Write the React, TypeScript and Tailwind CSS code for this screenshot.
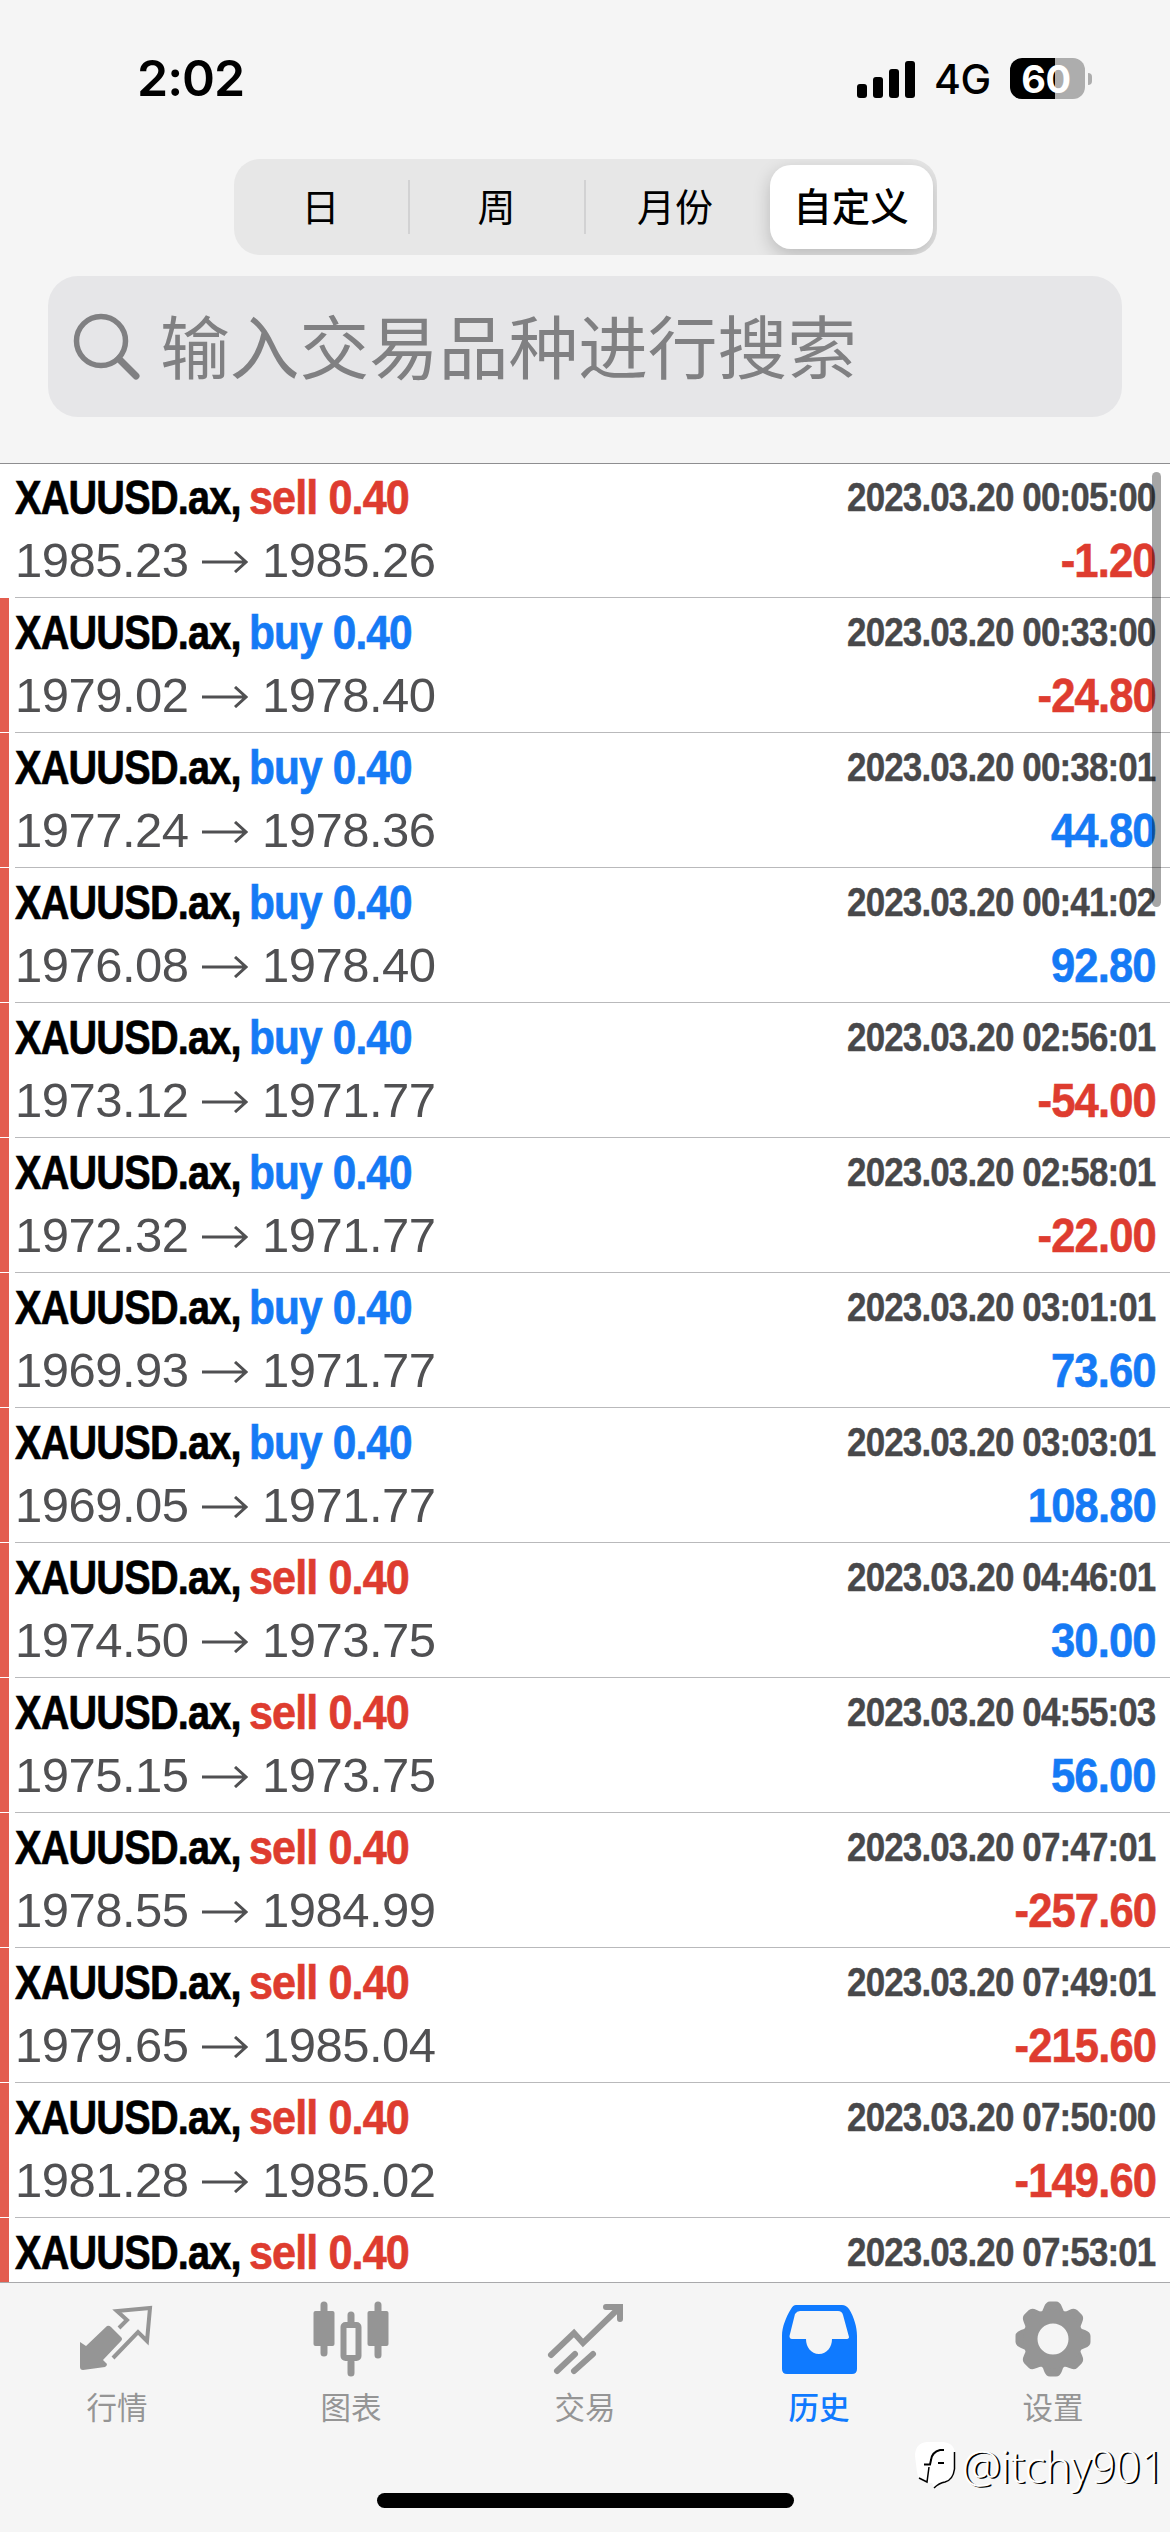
import type { ReactNode } from 'react'

interface Deal {
  side: 'buy' | 'sell'
  time: string
  open?: string
  close?: string
  profit?: string
}

const deals: Deal[] = [
  { side: 'sell', open: '1985.23', close: '1985.26', time: '2023.03.20 00:05:00', profit: '-1.20' },
  { side: 'buy', open: '1979.02', close: '1978.40', time: '2023.03.20 00:33:00', profit: '-24.80' },
  { side: 'buy', open: '1977.24', close: '1978.36', time: '2023.03.20 00:38:01', profit: '44.80' },
  { side: 'buy', open: '1976.08', close: '1978.40', time: '2023.03.20 00:41:02', profit: '92.80' },
  { side: 'buy', open: '1973.12', close: '1971.77', time: '2023.03.20 02:56:01', profit: '-54.00' },
  { side: 'buy', open: '1972.32', close: '1971.77', time: '2023.03.20 02:58:01', profit: '-22.00' },
  { side: 'buy', open: '1969.93', close: '1971.77', time: '2023.03.20 03:01:01', profit: '73.60' },
  { side: 'buy', open: '1969.05', close: '1971.77', time: '2023.03.20 03:03:01', profit: '108.80' },
  { side: 'sell', open: '1974.50', close: '1973.75', time: '2023.03.20 04:46:01', profit: '30.00' },
  { side: 'sell', open: '1975.15', close: '1973.75', time: '2023.03.20 04:55:03', profit: '56.00' },
  { side: 'sell', open: '1978.55', close: '1984.99', time: '2023.03.20 07:47:01', profit: '-257.60' },
  { side: 'sell', open: '1979.65', close: '1985.04', time: '2023.03.20 07:49:01', profit: '-215.60' },
  { side: 'sell', open: '1981.28', close: '1985.02', time: '2023.03.20 07:50:00', profit: '-149.60' },
  { side: 'sell', time: '2023.03.20 07:53:01' },
]

const periods = ['日', '周', '月份']

function StatusBar() {
  return (
    <div className="flex h-[159px] shrink-0 items-start justify-between pl-[137px] pr-[78px] pt-[48px] text-black">
      <div className="font-['Inter'] text-[50px] font-semibold leading-[60px] tracking-[-1px]">2:02</div>
      <div className="flex items-center pt-[9px]">
        <div className="flex h-[38px] items-end gap-[6px]">
          <div className="h-[14px] w-[10px] rounded-[3px] bg-black" />
          <div className="h-[21px] w-[10px] rounded-[3px] bg-black" />
          <div className="h-[29px] w-[10px] rounded-[3px] bg-black" />
          <div className="h-[37px] w-[10px] rounded-[3px] bg-black" />
        </div>
        <div className="ml-[19px] w-[58px] whitespace-nowrap pt-[2px] font-['Inter'] text-[41px] font-medium leading-[41px] tracking-[-0.3px]">4G</div>
        <div className="ml-[18px] flex h-[41px] w-[75px] items-center justify-center rounded-[12px] bg-[linear-gradient(to_right,#000_60%,#adadad_60%)] pr-[3px] pt-[1px] font-['Inter'] text-[38px] font-bold leading-[41px] tracking-[-0.5px] text-white">
          60
        </div>
        <div className="ml-[3px] h-[12px] w-[4px] rounded-r-[4px] bg-[#adadad]" />
      </div>
    </div>
  )
}

function PeriodPicker() {
  return (
    <div className="mx-auto flex h-[96px] w-[703px] shrink-0 items-center overflow-hidden rounded-[26px] bg-[#e7e7e7] text-[38px] text-black">
      {periods.map((period, i) => (
        <div
          key={period}
          className={`flex h-[54px] w-[176px] items-center justify-center pt-[3px] ${i < 2 ? 'border-r-2 border-[#d2d2d3]' : 'pl-[3px]'}`}
        >
          {period}
        </div>
      ))}
      <div className="ml-[8px] flex h-[84px] w-[163px] items-center justify-center rounded-[21px] bg-white pt-[2px] text-[38.5px] font-medium shadow-[0_6px_18px_rgba(0,0,0,0.2)]">
        自定义
      </div>
    </div>
  )
}

function SearchBox() {
  return (
    <div className="mx-[48px] mt-[21px] flex h-[141px] shrink-0 items-center rounded-[30px] bg-[#e6e6e8] pl-[24px] text-[#808082]">
      <svg className="h-[72px] w-[72px]" viewBox="0 0 72 72" fill="none" stroke="currentColor">
        <circle cx="29" cy="30" r="24.5" strokeWidth="5.5" />
        <path d="M47 48 64 65" strokeWidth="7" strokeLinecap="round" />
      </svg>
      <span className="ml-[16px] pt-[9px] text-[69.7px] leading-none">输入交易品种进行搜索</span>
    </div>
  )
}

function DealRow({ deal, marked }: { deal: Deal; marked: boolean }) {
  const sideColor = deal.side === 'buy' ? 'scale-x-[0.865] text-[#157af5]' : 'scale-x-[0.88] text-[#de3c2f]'
  const profitColor = deal.profit?.startsWith('-') ? 'text-[#de3c2f]' : 'text-[#157af5]'

  return (
    <div className="flex h-[135px] shrink-0 bg-white">
      <div className={`h-[134px] w-[9px] ${marked ? 'bg-[#e35d4f]' : ''}`} />
      <div className="ml-[6px] flex flex-1 flex-col border-b border-[#b9b9bb] pr-[14px] pt-[3px]">
        <div className="flex h-[63px] items-center justify-between whitespace-nowrap font-bold leading-[63px]">
          <div className="flex text-[49px] tracking-[-1px] [-webkit-text-stroke:0.7px_currentColor]">
            <span className="w-[234px] origin-left scale-x-[0.81] text-black">XAUUSD.ax,</span>
            <span className={`origin-left ${sideColor}`}>{deal.side} 0.40</span>
          </div>
          <span className="mr-px origin-right scale-x-[0.875] text-[40px] tracking-[-1px] text-[#48484a] [-webkit-text-stroke:0.4px_currentColor]">
            {deal.time}
          </span>
        </div>
        {deal.open && (
          <div className="flex h-[63px] items-center justify-between text-[49px] leading-[63px]">
            <div className="flex items-center text-[#505052]">
              <span className="w-[187px] tracking-[-0.5px]">{deal.open}</span>
              <svg className="mt-[3px] h-[22px] w-[46px]" viewBox="0 0 46 22" fill="none" stroke="currentColor" strokeWidth="3">
                <path d="M0 11H44M33 1 44 11 33 21" />
              </svg>
              <span className="ml-[14px] tracking-[-0.5px]">{deal.close}</span>
            </div>
            <span className={`origin-right scale-x-[0.89] font-bold tracking-[-1px] [-webkit-text-stroke:0.6px_currentColor] ${profitColor}`}>
              {deal.profit}
            </span>
          </div>
        )}
      </div>
    </div>
  )
}

function QuotesIcon() {
  return (
    <svg className="h-[78px] w-[78px]" viewBox="0 0 78 78">
      <path d="M2 42 8 46 29 26Q31 25 33 27L43 37Q45 39 43 41L25 60 29 64Q29 66 27 67L5 70Q2 70 2 67Z" fill="currentColor" />
      <path d="M41 28 49 20 39 11 72 8 69 41 60 32 35 58" fill="none" stroke="currentColor" strokeWidth="4" />
    </svg>
  )
}

function ChartIcon() {
  return (
    <svg className="h-[78px] w-[78px]" viewBox="0 0 78 78" fill="none" stroke="currentColor">
      <path d="M12 5V53M66 5V55M39 15V24M39 62V73" strokeWidth="7" strokeLinecap="round" />
      <rect x="1.5" y="11" width="21" height="35" rx="2" fill="currentColor" stroke="none" />
      <rect x="55.5" y="11" width="21" height="35" rx="2" fill="currentColor" stroke="none" />
      <rect x="31.5" y="25" width="15" height="33" rx="2" strokeWidth="6" />
    </svg>
  )
}

function TradeIcon() {
  return (
    <svg className="h-[78px] w-[78px]" viewBox="0 0 78 78" fill="none" stroke="currentColor" strokeWidth="6" strokeLinecap="round">
      <path d="M5 55 28 33 37 43 72 9" strokeLinejoin="miter" />
      <path d="M60 7H74V19" />
      <path d="M11 71 29 54M28 71 47 54" />
    </svg>
  )
}

function HistoryIcon() {
  return (
    <svg className="h-[78px] w-[78px]" viewBox="0 0 78 78">
      <path
        fillRule="evenodd"
        fill="currentColor"
        d="M16 5H62Q66 5 69 9C74 17 77 27 77 36V69Q77 74 72 74H7Q2 74 2 69V36C2 27 6 17 11 9Q13 5 16 5ZM20 11Q17 11 15 14L9.500 36Q9.500 39 12 39H26C26 47 31 54 39 54S52 47 52 39H66Q69 39 69 37L63 15Q62 11 58 11Z"
      />
    </svg>
  )
}

function SettingsIcon() {
  return (
    <svg className="h-[78px] w-[78px]" viewBox="-39 -39 78 78">
      <g fill="currentColor">
        {[0, 45, 90, 135, 180, 225, 270, 315].map((angle) => (
          <path
            key={angle}
            transform={`rotate(${angle})`}
            d="M-13 -26Q-10 -28 -9 -32Q-7 -37.500 -3 -37.500H3Q7 -37.500 9 -32Q10 -28 13 -26V-18H-13Z"
          />
        ))}
      </g>
      <circle r="22.500" fill="none" stroke="currentColor" strokeWidth="14" />
    </svg>
  )
}

const tabs: { label: string; icon: ReactNode; active?: boolean }[] = [
  { label: '行情', icon: <QuotesIcon /> },
  { label: '图表', icon: <ChartIcon /> },
  { label: '交易', icon: <TradeIcon /> },
  { label: '历史', icon: <HistoryIcon />, active: true },
  { label: '设置', icon: <SettingsIcon /> },
]

function TabBar() {
  return (
    <div className="flex h-[250px] shrink-0 flex-col border-t border-[#a9a9ab] bg-[#f5f5f5]">
      <div className="grid grid-cols-5 pt-[17px]">
        {tabs.map((tab) => (
          <div key={tab.label} className={`flex flex-col items-center ${tab.active ? 'text-[#0f7aff]' : 'text-[#959595]'}`}>
            {tab.icon}
            <span className={`mt-[10px] text-[30.5px] leading-[40px] ${tab.active ? 'font-medium' : ''}`}>{tab.label}</span>
          </div>
        ))}
      </div>
      <div className="mx-auto mt-[65px] h-[15px] w-[417px] rounded-full bg-black" />
    </div>
  )
}

function Watermark() {
  return (
    <div className="absolute right-[5px] top-[2441px] flex items-center gap-[6px] text-white">
      <svg className="h-[48px] w-[41px] overflow-visible" viewBox="0 0 41 48">
        <path
          d="M12 0H28Q40 1 40 13V26Q39 38 30 40 23 41 19 46L17 41H12Q3 39 2 30L0 14Q0 1 12 0Z"
          fill="currentColor"
        />
        <path d="M39.500 10V27Q38 38 30 40 24 41 19 46M4 36 12 40 14 25" fill="none" stroke="#000" strokeWidth="1.500" />
        <path d="M29 8H25Q17 10 16 18L15 22.500H9M23 21H29" fill="none" stroke="#000" strokeWidth="2" />
      </svg>
      <span className="font-['Open_Sans'] text-[44px] font-light leading-[50px] tracking-[-0.3px] [text-shadow:2px_1px_0_#000]">@itchy901</span>
    </div>
  )
}

export default function App() {
  return (
    <div className="relative flex h-[2532px] w-[1170px] flex-col overflow-hidden bg-[#f5f5f5] font-['Liberation_Sans','Noto_Sans_CJK_SC',sans-serif]">
      <StatusBar />
      <PeriodPicker />
      <SearchBox />
      <div className="relative mt-[46px] flex h-[1819px] shrink-0 flex-col overflow-hidden bg-white">
        {deals.map((deal, i) => (
          <DealRow key={deal.time} deal={deal} marked={i > 0} />
        ))}
        <div className="absolute left-0 right-0 top-0 h-px bg-[#8e8e90]" />
        <div className="absolute right-[9px] top-[9px] h-[435px] w-[9px] rounded-full bg-black/35" />
      </div>
      <TabBar />
      <Watermark />
    </div>
  )
}
